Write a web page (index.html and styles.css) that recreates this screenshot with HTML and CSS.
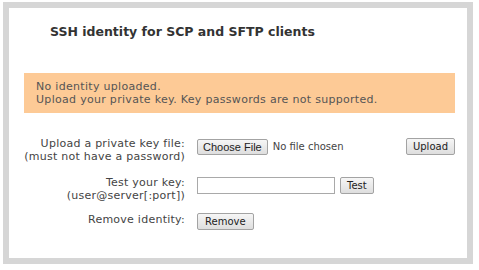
FILE: index.html
```html
<!DOCTYPE html>
<html>
<head>
<meta charset="utf-8">
<link rel="stylesheet" href="styles.css">
</head>
<body>
<div class="frame">
  <h1 class="title">SSH identity for SCP and SFTP clients</h1>
  <div class="notice">
    <div>No identity uploaded.</div>
    <div>Upload your private key. Key passwords are not supported.</div>
  </div>
  <div class="form">
    <div class="label">Upload a private key file:<br>(must not have a password)</div>
    <div class="control upload-row">
      <span class="file"><button class="btn btn-file">Choose File</button><span class="nofile">No file chosen</span></span>
      <button class="btn">Upload</button>
    </div>
    <div class="label">Test your key:<br>(user@server[:port])</div>
    <div class="control"><input class="text" type="text"><button class="btn">Test</button></div>
    <div class="label last">Remove identity:</div>
    <div class="control last"><button class="btn btn-remove">Remove</button></div>
  </div>
</div>
</body>
</html>
```
FILE: styles.css
```css
html, body { margin: 0; padding: 0; background: #fff; }
body { font-family: "DejaVu Sans", Verdana, sans-serif; font-size: 11px; color: #444; }
.frame {
  margin: 2px 6px 0 3px;
  height: 250px;
  border: 6px solid #d6d6d6;
  background: #fff;
}
.title {
  margin: 0;
  padding: 16px 0 0 41px;
  font-family: Tahoma, "DejaVu Sans", sans-serif;
  font-size: 12.5px;
  font-weight: bold;
  color: #333;
  line-height: 16px;
}
.notice {
  margin: 33px 12px 0 15px;
  height: 40px;
  box-sizing: border-box;
  padding: 7px 12px;
  background: #fdca96;
  color: #555;
  line-height: 13px;
  letter-spacing: 0.3px;
}
.form {
  display: grid;
  grid-template-columns: 176px 1fr;
  column-gap: 12px;
  row-gap: 14px;
  margin: 25px 12px 0 0;
  align-items: start;
}
.label { text-align: right; line-height: 12.5px; color: #444; letter-spacing: 0.25px; }
.label.last { margin-top: -2px; }
.control.last { margin-top: -3px; }
.control { display: flex; align-items: center; gap: 5px; }
.upload-row { justify-content: space-between; }
.file { display: flex; align-items: center; gap: 5px; }
.nofile { color: #444; font-size: 10px; }
.btn {
  font-family: "DejaVu Sans", Verdana, sans-serif;
  font-size: 10px;
  color: #222;
  height: 17px;
  padding: 0 6px;
  margin: 0;
  border: 1px solid #a3a3a3;
  border-radius: 2px;
  background: linear-gradient(#f6f6f6, #dedede);
}
.btn-file {
  font-family: "Liberation Sans", Arial, sans-serif;
  font-size: 11px;
  padding: 0 5px;
  height: 16px;
}
.btn-remove { padding: 0 7px; }
.text {
  width: 138px;
  height: 17px;
  box-sizing: border-box;
  border: 1px solid #a9a9a9;
  margin: 0;
}
```
